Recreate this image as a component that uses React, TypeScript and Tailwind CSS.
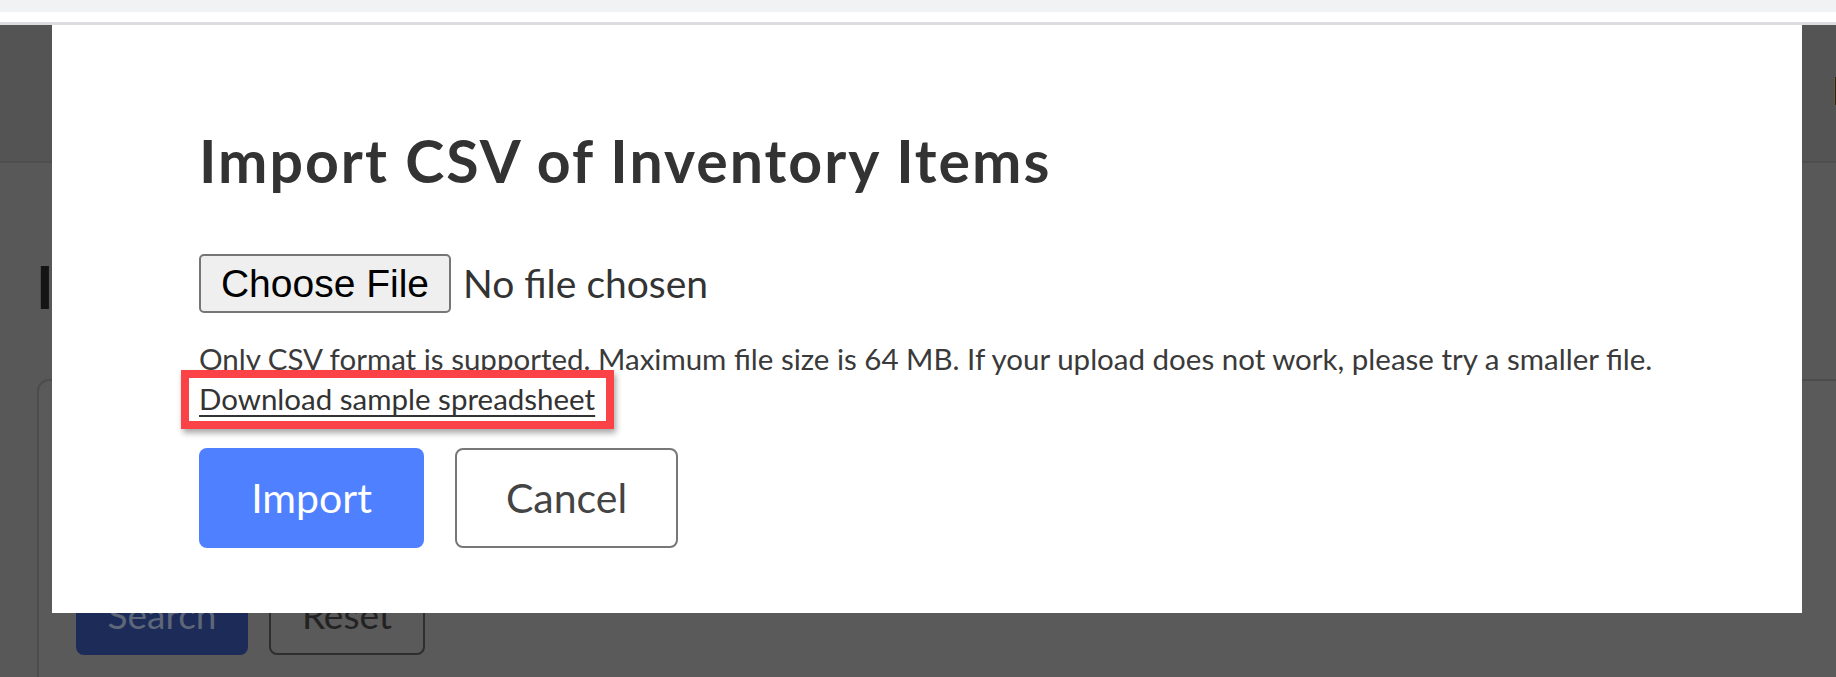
import React from 'react';

const lato = "font-['Lato',sans-serif]";

const BackgroundPage = () => {
  return (
    <div className="flex flex-col flex-1 min-h-0 overflow-hidden bg-[#585858]">
      {/* dimmed app header */}
      <div className="shrink-0 h-[138px] bg-[#545454] border-b-2 border-[#4e4e4e] flex justify-end pt-[52px]">
        <div className="w-[4px] h-[28px] -mr-[2px] bg-[#2a2519] border-l border-[#6b5a3a]" />
      </div>

      {/* dimmed page body, mostly hidden under the modal */}
      <div className="shrink-0 flex flex-col pt-[87px]">
        <div className="ml-[36px] w-[16px] overflow-hidden">
          <h1 className={`${lato} text-[60px] leading-[1.2] font-bold text-[#141414] whitespace-nowrap`}>
            Inventory Items
          </h1>
        </div>
        <div className="ml-[37px] -mr-[10px] mt-[57px] h-[400px] bg-[#5a5a5a] border-2 border-[#4c4c4c] rounded-xl pt-[194px] pl-[37px] flex items-start gap-[21px]">
          <button className={`${lato} w-[172px] h-[80px] rounded-lg bg-[#1c2b57] text-[#5e6679] text-[37px]`}>
            Search
          </button>
          <button className={`${lato} w-[156px] h-[80px] rounded-lg border-2 border-[#2e2e2e] text-[#222] text-[37px]`}>
            Reset
          </button>
        </div>
      </div>
    </div>
  );
};

const ImportModal = () => {
  return (
    <div className={`${lato} absolute left-[52px] top-[25px] w-[1750px] bg-white pl-[147px] pt-[101px] pb-[65px] text-[#333]`}>
      <h2 className="text-[59px] leading-[1.2] font-bold tracking-[2px] text-[#333] whitespace-nowrap">
        Import CSV of Inventory Items
      </h2>

      {/* fake native file input */}
      <div className="flex items-center mt-[57px]">
        <button className="font-['Liberation_Sans',Arial,sans-serif] h-[59px] w-[252px] bg-[#efefef] border-2 border-[#767676] rounded-[5px] text-[39px] text-black leading-none">
          Choose File
        </button>
        <span className="ml-[12px] text-[39px] text-[#333] leading-none">No file chosen</span>
      </div>

      <p className="mt-[26px] text-[29.5px] leading-[40px] text-[#3a3a3a] whitespace-nowrap">
        Only CSV format is supported. Maximum file size is 64 MB. If your upload does not work, please try a smaller file.
      </p>
      <div className="text-[29.5px] leading-[40px]">
        <span className="relative inline-block">
          <a href="#" className="text-[#333] underline decoration-2 underline-offset-[5px]">
            Download sample spreadsheet
          </a>
          {/* annotation highlight */}
          <span className="absolute -left-[18px] -right-[19px] -top-[9px] -bottom-[10px] border-[8px] border-[#fb4347] shadow-[2px_4px_6px_rgba(0,0,0,0.35)] pointer-events-none" />
        </span>
      </div>

      <div className="flex mt-[29px] gap-[31px]">
        <button className="w-[225px] h-[100px] rounded-lg bg-[#4f80ff] text-white text-[41px]">
          Import
        </button>
        <button className="w-[223px] h-[100px] rounded-lg border-2 border-[#777] bg-white text-[#444] text-[41px]">
          Cancel
        </button>
      </div>
    </div>
  );
};

export default function App() {
  return (
    <div className="relative w-full h-[677px] overflow-hidden flex flex-col bg-white">
      {/* browser frame strips */}
      <div className="shrink-0 h-[12px] bg-[#f1f2f4]" />
      <div className="shrink-0 h-[10px] bg-white" />
      <div className="shrink-0 h-[3px] bg-[#dcdde0]" />
      <BackgroundPage />
      <ImportModal />
    </div>
  );
}
